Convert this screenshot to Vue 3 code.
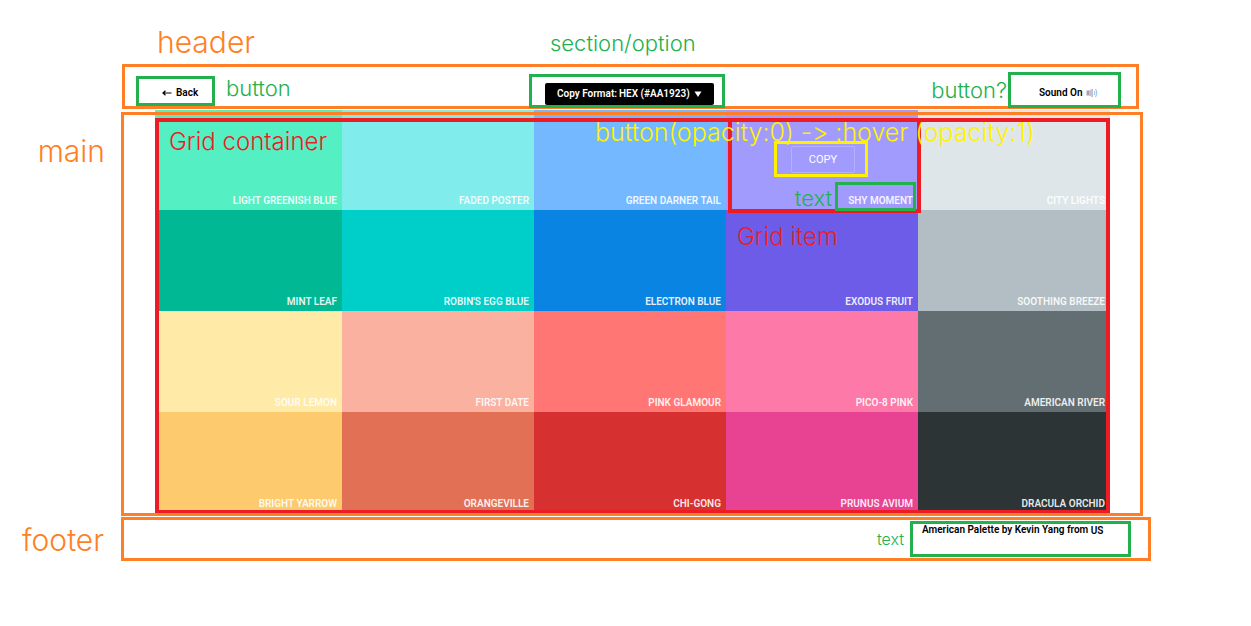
<script setup>
import { ref } from 'vue'

const format = ref('HEX (#AA1923)')
const formats = ['HEX (#AA1923)']

const swatches = [
  { name: 'Light Greenish Blue', tone: 'light-greenish-blue' },
  { name: 'Faded Poster', tone: 'faded-poster' },
  { name: 'Green Darner Tail', tone: 'green-darner-tail' },
  { name: 'Shy Moment', tone: 'shy-moment', marked: true },
  { name: 'City Lights', tone: 'city-lights' },
  { name: 'Mint Leaf', tone: 'mint-leaf' },
  { name: "Robin's Egg Blue", tone: 'robins-egg-blue' },
  { name: 'Electron Blue', tone: 'electron-blue' },
  { name: 'Exodus Fruit', tone: 'exodus-fruit' },
  { name: 'Soothing Breeze', tone: 'soothing-breeze' },
  { name: 'Sour Lemon', tone: 'sour-lemon' },
  { name: 'First Date', tone: 'first-date' },
  { name: 'Pink Glamour', tone: 'pink-glamour' },
  { name: 'Pico-8 Pink', tone: 'pico-8-pink' },
  { name: 'American River', tone: 'american-river' },
  { name: 'Bright Yarrow', tone: 'bright-yarrow' },
  { name: 'Orangeville', tone: 'orangeville' },
  { name: 'Chi-Gong', tone: 'chi-gong' },
  { name: 'Prunus Avium', tone: 'prunus-avium' },
  { name: 'Dracula Orchid', tone: 'dracula-orchid' },
]
</script>

<template>
  <div class="page">
    <header class="header">
      <span class="note note-lg orange note-header">header</span>
      <div class="cell-left">
        <button type="button" class="back">
          <svg class="arrow" viewBox="0 0 10 8" aria-hidden="true">
            <path d="M1 4H9.500M3.500 1.800L1 4L3.500 6.200" fill="none" stroke="#000" stroke-width="1.200" />
          </svg>
          <span>Back</span>
        </button>
        <span class="note green note-button">button</span>
      </div>
      <div class="format">
        <span class="note green note-section">section/option</span>
        <label class="format-box">
          <span class="format-label">Copy Format:</span>
          <select v-model="format" class="format-select">
            <option v-for="f in formats" :key="f">{{ f }}</option>
          </select>
          <svg class="caret" viewBox="0 0 8 6" aria-hidden="true"><path d="M0.500 0.500H7.500L4 6Z" fill="#fff" /></svg>
        </label>
      </div>
      <div class="cell-right">
        <span class="note green">button?</span>
        <button type="button" class="sound">
          <span>Sound On</span>
          <svg class="speaker" viewBox="0 0 12 10" aria-hidden="true">
            <path d="M0.500 2.500H3V7.500H0.500Z" fill="#a99fb0" />
            <path d="M3 2.500L7 0.500V9.500L3 7.500Z" fill="#c9bfce" />
            <path d="M8.200 3Q9.400 5 8.200 7M9.500 1Q12 5 9.500 9" fill="none" stroke="#9fc9ee" stroke-width="1.200" />
          </svg>
        </button>
      </div>
    </header>

    <main class="main">
      <span class="note note-lg orange note-main">main</span>
      <div class="grid">
        <div v-for="s in swatches" :key="s.tone" class="swatch" :class="s.tone">
          <template v-if="s.marked">
            <div class="item-frame"></div>
            <div class="copy-frame"><button type="button" class="copy">COPY</button></div>
            <span class="note yellow note-hover">button(opacity:0) -&gt; :hover (opacity:1)</span>
            <span class="note green note-text">text</span>
            <div class="name-frame"></div>
            <span class="note note-md red note-item">Grid item</span>
          </template>
          <span class="name">{{ s.name }}</span>
        </div>
        <div class="grid-frame"></div>
        <span class="note note-md red note-grid">Grid container</span>
      </div>
      <div class="main-frame"></div>
    </main>

    <footer class="footer">
      <span class="note note-lg orange note-footer">footer</span>
      <span class="note note-sm green">text</span>
      <p class="credit">American Palette by Kevin Yang from <span class="us">US</span></p>
    </footer>
  </div>
</template>

<style>
body {
  margin: 0;
  background: #fff;
}
</style>

<style scoped>
* {
  box-sizing: border-box;
}
.page {
  padding: 64px 0;
  font-family: Roboto, "Liberation Sans", sans-serif;
  font-size: 10px;
  font-weight: 600;
  line-height: 12px;
  color: #000;
  overflow: hidden;
}
button {
  font: inherit;
  color: inherit;
  background: none;
  cursor: pointer;
}
.note {
  font-family: Inter, "Liberation Sans", sans-serif;
  font-size: 22px;
  font-weight: 300;
  line-height: 28px;
  font-feature-settings: "calt" 0;
  white-space: nowrap;
}
.note-lg {
  font-size: 30px;
  line-height: 36px;
}
.note-md {
  font-size: 24px;
}
.note-sm {
  font-size: 16px;
  line-height: 20px;
}
.orange { color: #ff7f27; }
.green { color: #22b14c; }
.red { color: #ed1c24; }
.yellow { color: #fff200; }

.header {
  position: relative;
  display: grid;
  grid-template-columns: 1fr auto 1fr;
  align-items: end;
  height: 45px;
  margin: 0 112px 0 122px;
  padding: 0 15px 0 11px;
  border: 3px solid #ff7f27;
}
.note-header {
  position: absolute;
  left: 32px;
  top: -43px;
}
.cell-left {
  display: flex;
  align-items: center;
  gap: 11px;
}
.note-button {
  align-self: flex-start;
  line-height: 24px;
}
.cell-right {
  display: flex;
  align-items: center;
  justify-content: flex-end;
  gap: 1px;
  margin-bottom: -2px;
}
.back {
  display: flex;
  align-items: center;
  gap: 4px;
  width: 79px;
  height: 30px;
  padding: 4px 0 0 23px;
  border: 3px solid #22b14c;
}
.arrow {
  width: 10px;
  height: 8px;
}
.sound {
  display: flex;
  align-items: center;
  gap: 3px;
  width: 113px;
  height: 36px;
  padding: 6px 0 0 28px;
  border: 3px solid #22b14c;
}
.speaker {
  width: 12px;
  height: 10px;
}
.format {
  position: relative;
  width: 196px;
  height: 34px;
  margin: 0 3px -2px 0;
  padding: 6px 8px 0 13px;
  border: 3px solid #22b14c;
}
.note-section {
  position: absolute;
  left: 18px;
  top: -48px;
}
.format-box {
  display: flex;
  align-items: center;
  height: 22px;
  padding: 0 12px;
  border-radius: 2px;
  background: #000;
  color: #fff;
}
.format-label {
  margin-right: 2px;
  white-space: nowrap;
}
.format-select {
  flex: 1;
  min-width: 0;
  padding: 0;
  border: 0;
  appearance: none;
  background: none;
  color: inherit;
  font: inherit;
}
.caret {
  width: 8px;
  height: 6px;
}

.main {
  position: relative;
  margin: 1px 108px 0 121px;
  padding: 0 33px 3px 34px;
}
.note-main {
  position: absolute;
  right: 100%;
  top: 23px;
  margin-right: 16px;
}
.main-frame {
  position: absolute;
  inset: 2px 0 0;
  border: 3px solid #ff7f27;
  pointer-events: none;
}
.grid {
  position: relative;
  display: grid;
  grid-template-columns: 187fr 192fr 192fr 192fr 192fr;
  grid-template-rows: 100px repeat(3, 101px);
}
.grid-frame {
  position: absolute;
  inset: 8px 0 -1px;
  border: 4px solid #ed1c24;
  pointer-events: none;
}
.note-grid {
  position: absolute;
  left: 14px;
  top: 18px;
}
.swatch {
  position: relative;
  display: flex;
  align-items: flex-end;
  justify-content: flex-end;
  padding: 0 5px 3px;
  color: rgba(255, 255, 255, 0.9);
}
.name {
  text-transform: uppercase;
}
.item-frame {
  position: absolute;
  z-index: 1;
  inset: 8px -3px -3px 2px;
  border: 4px solid #ed1c24;
}
.copy-frame {
  position: absolute;
  z-index: 2;
  top: 31px;
  left: 48px;
  width: 94px;
  height: 36px;
  padding: 2px 14px;
  border: 3px solid #fff200;
}
.copy {
  width: 64px;
  height: 27px;
  padding: 0;
  border: 1px solid rgba(255, 255, 255, 0.2);
  border-radius: 2px;
  color: #fff;
  font-size: 11px;
  font-weight: 400;
}
.note-hover {
  position: absolute;
  z-index: 2;
  left: -131px;
  top: 8px;
  font-size: 25px;
}
.note-text {
  position: absolute;
  z-index: 2;
  right: 86px;
  bottom: -2px;
}
.name-frame {
  position: absolute;
  z-index: 2;
  right: 2px;
  bottom: -1px;
  width: 81px;
  height: 29px;
  border: 3px solid #22b14c;
}
.note-item {
  position: absolute;
  z-index: 2;
  left: 11px;
  top: 113px;
}
.light-greenish-blue { background: #55efc4; }
.faded-poster { background: #81ecec; }
.green-darner-tail { background: #74b9ff; }
.shy-moment { background: #a29bfe; }
.city-lights { background: #dfe6e9; }
.mint-leaf { background: #00b894; }
.robins-egg-blue { background: #00cec9; }
.electron-blue { background: #0984e3; }
.exodus-fruit { background: #6c5ce7; }
.soothing-breeze { background: #b2bec3; }
.sour-lemon { background: #ffeaa7; }
.first-date { background: #fab1a0; }
.pink-glamour { background: #ff7675; }
.pico-8-pink { background: #fd79a8; }
.american-river { background: #636e72; }
.bright-yarrow { background: #fdcb6e; }
.orangeville { background: #e17055; }
.chi-gong { background: #d63031; }
.prunus-avium { background: #e84393; }
.dracula-orchid { background: #2d3436; }

.footer {
  position: relative;
  display: flex;
  align-items: center;
  justify-content: flex-end;
  gap: 6px;
  height: 44px;
  margin: 1px 100px 0 121px;
  padding: 0 17px 0 0;
  border: 3px solid #ff7f27;
}
.note-footer {
  position: absolute;
  right: 100%;
  top: 2px;
  margin-right: 20px;
}
.credit {
  width: 221px;
  height: 36px;
  margin: 0;
  padding: 0 0 0 9px;
  border: 3px solid #22b14c;
  white-space: nowrap;
}
.us {
  vertical-align: -1px;
}
</style>
